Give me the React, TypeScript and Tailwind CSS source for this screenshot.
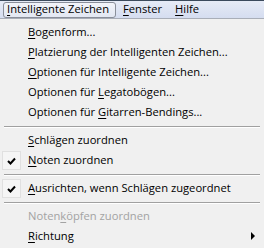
import React from "react";

type Item = {
  label: React.ReactNode;
  checked?: boolean;
  disabled?: boolean;
  submenu?: boolean;
};

const U = ({ children }: { children: React.ReactNode }) => (
  <span className="underline underline-offset-[2px]">{children}</span>
);

function Row({ item }: { item: Item }) {
  return (
    <div
      className={`relative flex h-[20px] items-center pl-[28px] ${
        item.disabled ? "text-[#a3a3a3]" : "text-black"
      }`}
    >
      {item.checked && (
        <div className="absolute left-[2px] top-[1px] flex h-[19px] w-[19px] items-center justify-center border border-[#e0e0e0] bg-[#f5f5f5]">
          <svg width="9" height="8" viewBox="0 0 9 8">
            <path d="M1 4 L3.5 6.5 L8 1.5" stroke="#000" strokeWidth="2" fill="none" />
          </svg>
        </div>
      )}
      <span>{item.label}</span>
      {item.submenu && (
        <svg className="absolute right-[8px] top-[6px]" width="5" height="8" viewBox="0 0 5 8">
          <path d="M0 0 L4 4 L0 8 Z" fill="#000" />
        </svg>
      )}
    </div>
  );
}

function Sep() {
  return (
    <div className="flex h-[8px] items-center px-[4px]">
      <div className="h-[1px] w-full bg-[#a0a0a0] shadow-[0_1px_0_#ffffff]" />
    </div>
  );
}

export default function App() {
  const group1: Item[] = [
    { label: <><U>B</U>ogenform...</> },
    { label: <><U>P</U>latzierung der Intelligenten Zeichen...</> },
    { label: <><U>O</U>ptionen für Intelligente Zeichen...</> },
    { label: <>Optionen für <U>L</U>egatobögen...</> },
    { label: <>Optionen für <U>G</U>itarren-Bendings...</> },
  ];
  const group2: Item[] = [
    { label: <><U>S</U>chlägen zuordnen</> },
    { label: <><U>N</U>oten zuordnen</>, checked: true },
  ];

  return (
    <div
      className="h-[248px] w-[264px] overflow-hidden bg-[#f0f0f0] text-[11.2px]"
      style={{ fontFamily: '"Open Sans", "Noto Sans", sans-serif' }}
    >
      <div className="border-t border-[#3b4a5c]">
        <div className="flex h-[18px] items-center border-b border-[#a9aeb8] bg-gradient-to-b from-[#e6ebf6] to-[#d5ddf0] pl-[3px]">
          <div className="flex h-[16px] w-[113px] items-center rounded-[3px] border border-[#8a8f9a] bg-gradient-to-b from-[#f2f4f9] to-[#e2e7f2] px-[3px]">
            <U>I</U>ntelligente Zeichen
          </div>
          <div className="ml-[5px] px-[2px]">
            <U>F</U>enster
          </div>
          <div className="ml-[9px] px-[2px]">
            <U>H</U>ilfe
          </div>
        </div>
      </div>
      <div className="pt-[3px]">
        {group1.map((it, i) => (
          <Row key={i} item={it} />
        ))}
        <Sep />
        {group2.map((it, i) => (
          <Row key={i} item={it} />
        ))}
        <Sep />
        <Row item={{ label: <><U>A</U>usrichten, wenn Schlägen zugeordnet</>, checked: true }} />
        <Sep />
        <Row item={{ label: <>Noten<U>k</U>öpfen zuordnen</>, disabled: true }} />
        <Row item={{ label: <><U>R</U>ichtung</>, submenu: true }} />
      </div>
    </div>
  );
}
